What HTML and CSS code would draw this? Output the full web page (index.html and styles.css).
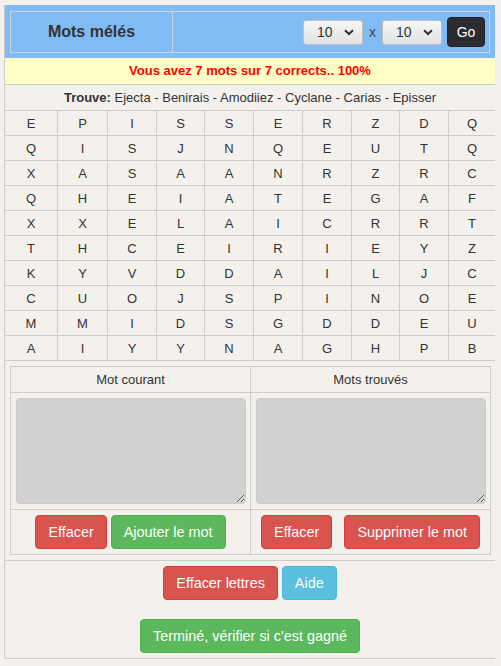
FILE: index.html
```html
<!DOCTYPE html>
<html lang="fr">
<head>
<meta charset="utf-8">
<title>Mots mélés</title>
<link rel="stylesheet" href="styles.css">
</head>
<body>
<div class="page">
  <div class="header">
    <div class="hbox">
      <div class="title">Mots mélés</div>
      <div class="controls">
        <div class="sel"><span>10</span><svg class="chev" width="10" height="7" viewBox="0 0 10 7"><path d="M1 1.2 L5 5 L9 1.2" fill="none" stroke="#333" stroke-width="2"/></svg></div>
        <span class="times">x</span>
        <div class="sel"><span>10</span><svg class="chev" width="10" height="7" viewBox="0 0 10 7"><path d="M1 1.2 L5 5 L9 1.2" fill="none" stroke="#333" stroke-width="2"/></svg></div>
        <button class="go">Go</button>
      </div>
    </div>
  </div>
  <div class="msg">Vous avez 7 mots sur 7 corrects.. 100%</div>
  <div class="found"><b>Trouve:</b> Ejecta - Benirais - Amodiiez - Cyclane - Carias - Episser</div>
  <table class="grid">
    <colgroup><col><col><col><col><col><col><col><col><col><col></colgroup>
    <tr><td>E</td><td>P</td><td>I</td><td>S</td><td>S</td><td>E</td><td>R</td><td>Z</td><td>D</td><td>Q</td></tr>
    <tr><td>Q</td><td>I</td><td>S</td><td>J</td><td>N</td><td>Q</td><td>E</td><td>U</td><td>T</td><td>Q</td></tr>
    <tr><td>X</td><td>A</td><td>S</td><td>A</td><td>A</td><td>N</td><td>R</td><td>Z</td><td>R</td><td>C</td></tr>
    <tr><td>Q</td><td>H</td><td>E</td><td>I</td><td>A</td><td>T</td><td>E</td><td>G</td><td>A</td><td>F</td></tr>
    <tr><td>X</td><td>X</td><td>E</td><td>L</td><td>A</td><td>I</td><td>C</td><td>R</td><td>R</td><td>T</td></tr>
    <tr><td>T</td><td>H</td><td>C</td><td>E</td><td>I</td><td>R</td><td>I</td><td>E</td><td>Y</td><td>Z</td></tr>
    <tr><td>K</td><td>Y</td><td>V</td><td>D</td><td>D</td><td>A</td><td>I</td><td>L</td><td>J</td><td>C</td></tr>
    <tr><td>C</td><td>U</td><td>O</td><td>J</td><td>S</td><td>P</td><td>I</td><td>N</td><td>O</td><td>E</td></tr>
    <tr><td>M</td><td>M</td><td>I</td><td>D</td><td>S</td><td>G</td><td>D</td><td>D</td><td>E</td><td>U</td></tr>
    <tr><td>A</td><td>I</td><td>Y</td><td>Y</td><td>N</td><td>A</td><td>G</td><td>H</td><td>P</td><td>B</td></tr>
  </table>
  <div class="panel">
    <div class="cell head">Mot courant</div>
    <div class="cell head">Mots trouvés</div>
    <div class="cell area"><textarea class="ta"></textarea></div>
    <div class="cell area"><textarea class="ta"></textarea></div>
    <div class="cell btns left"><button class="btn danger">Effacer</button><button class="btn success">Ajouter le mot</button></div>
    <div class="cell btns right"><button class="btn danger">Effacer</button><button class="btn danger">Supprimer le mot</button></div>
  </div>
  <div class="actions">
    <div class="row"><button class="btn danger">Effacer lettres</button><button class="btn info">Aide</button></div>
    <div class="row second"><button class="btn success">Terminé, vérifier si c'est gagné</button></div>
  </div>
</div>
</body>
</html>
```
FILE: styles.css
```css
* { box-sizing: border-box; }
html, body { margin: 0; padding: 0; background: #f4f1ec; }
body {
  font-family: "Liberation Sans", Arial, sans-serif;
  font-size: 13px;
  color: #333;
}
.page {
  margin: 5px 0 0 4px;
  width: 491px;
  border-left: 1px solid #ccc;
  border-bottom: 1px solid #ccc;
}
.header {
  background: #80bbf5;
  padding: 6px 5px 5px 5px;
}
.hbox {
  display: flex;
  height: 42px;
  border: 1px solid #c9d3de;
}
.title {
  width: 162px;
  border-right: 1px solid #c9d3de;
  display: flex;
  align-items: center;
  justify-content: center;
  font-weight: bold;
  font-size: 16px;
  color: #333;
}
.controls {
  flex: 1;
  display: flex;
  align-items: center;
  justify-content: flex-end;
  padding-right: 4px;
}
.sel {
  width: 60px;
  height: 25px;
  border: 1px solid #c0c0c0;
  border-radius: 3px;
  background: linear-gradient(#f6f6f6, #e2e2e2);
  display: flex;
  align-items: center;
  padding-left: 13px;
  font-size: 14px;
  color: #333;
}
.sel span { width: 27px; }
.chev { display: block; margin-top: 1px; }
.times {
  margin: 0 6px;
  color: #444;
  font-size: 14px;
}
.go {
  margin-left: 5px;
  width: 38px;
  height: 30px;
  border: 1px solid #222;
  border-radius: 4px;
  background: #2c2b30;
  color: #fff;
  font-family: inherit;
  font-size: 14px;
  padding: 0;
}
.msg {
  background: #ffffc6;
  height: 27px;
  border-bottom: 1px solid #ccc;
  color: #f00;
  font-weight: bold;
  text-align: center;
  line-height: 26px;
}
.found {
  height: 25px;
  line-height: 25px;
  text-align: center;
}
.grid {
  width: 490px;
  table-layout: fixed;
  border-collapse: separate;
  border-spacing: 0;
  border-top: 1px solid #ccc;
}
.grid col { width: 49px; }
.grid col:nth-child(1) { width: 52px; }
.grid col:nth-child(2) { width: 50px; }
.grid col:nth-child(4) { width: 48px; }
.grid col:nth-child(8) { width: 48px; }
.grid col:nth-child(10) { width: 47px; }
.grid td {
  height: 25px;
  padding: 0;
  text-align: center;
  border-left: 1px solid #ccc;
  border-bottom: 1px solid #ccc;
}
.grid td:first-child { border-left: none; }
.panel {
  margin: 5px 4px 0 5px;
  display: grid;
  grid-template-columns: 240px 240px;
  border-top: 1px solid #ccc;
  border-left: 1px solid #ccc;
}
.cell {
  border-right: 1px solid #ccc;
  border-bottom: 1px solid #ccc;
}
.head {
  height: 26px;
  line-height: 25px;
  text-align: center;
}
.area { padding: 5px 4px 5px 5px; }
.ta {
  display: block;
  width: 100%;
  height: 106px;
  margin: 0;
  background: #d1d1d1;
  border: 1px solid #cacaca;
  border-radius: 4px;
  resize: both;
}
.btns {
  padding: 5px 0;
  display: flex;
  justify-content: center;
}
.left { gap: 4px; }
.right { gap: 12px; }
.btn {
  height: 34px;
  padding: 0 12px;
  border: 1px solid transparent;
  border-radius: 4px;
  font-family: inherit;
  font-size: 14.4px;
  color: #fff;
  line-height: 20px;
}
.danger { background: #d9534f; border-color: #d43f3a; }
.success { background: #5cb85c; border-color: #4cae4c; }
.info { background: #5bc0de; border-color: #46b8da; }
.actions {
  margin-top: 5px;
  border-top: 1px solid #ccc;
  padding: 5px 0 5px;
}
.row {
  display: flex;
  justify-content: center;
  gap: 4px;
}
.second { margin-top: 19px; }
```
